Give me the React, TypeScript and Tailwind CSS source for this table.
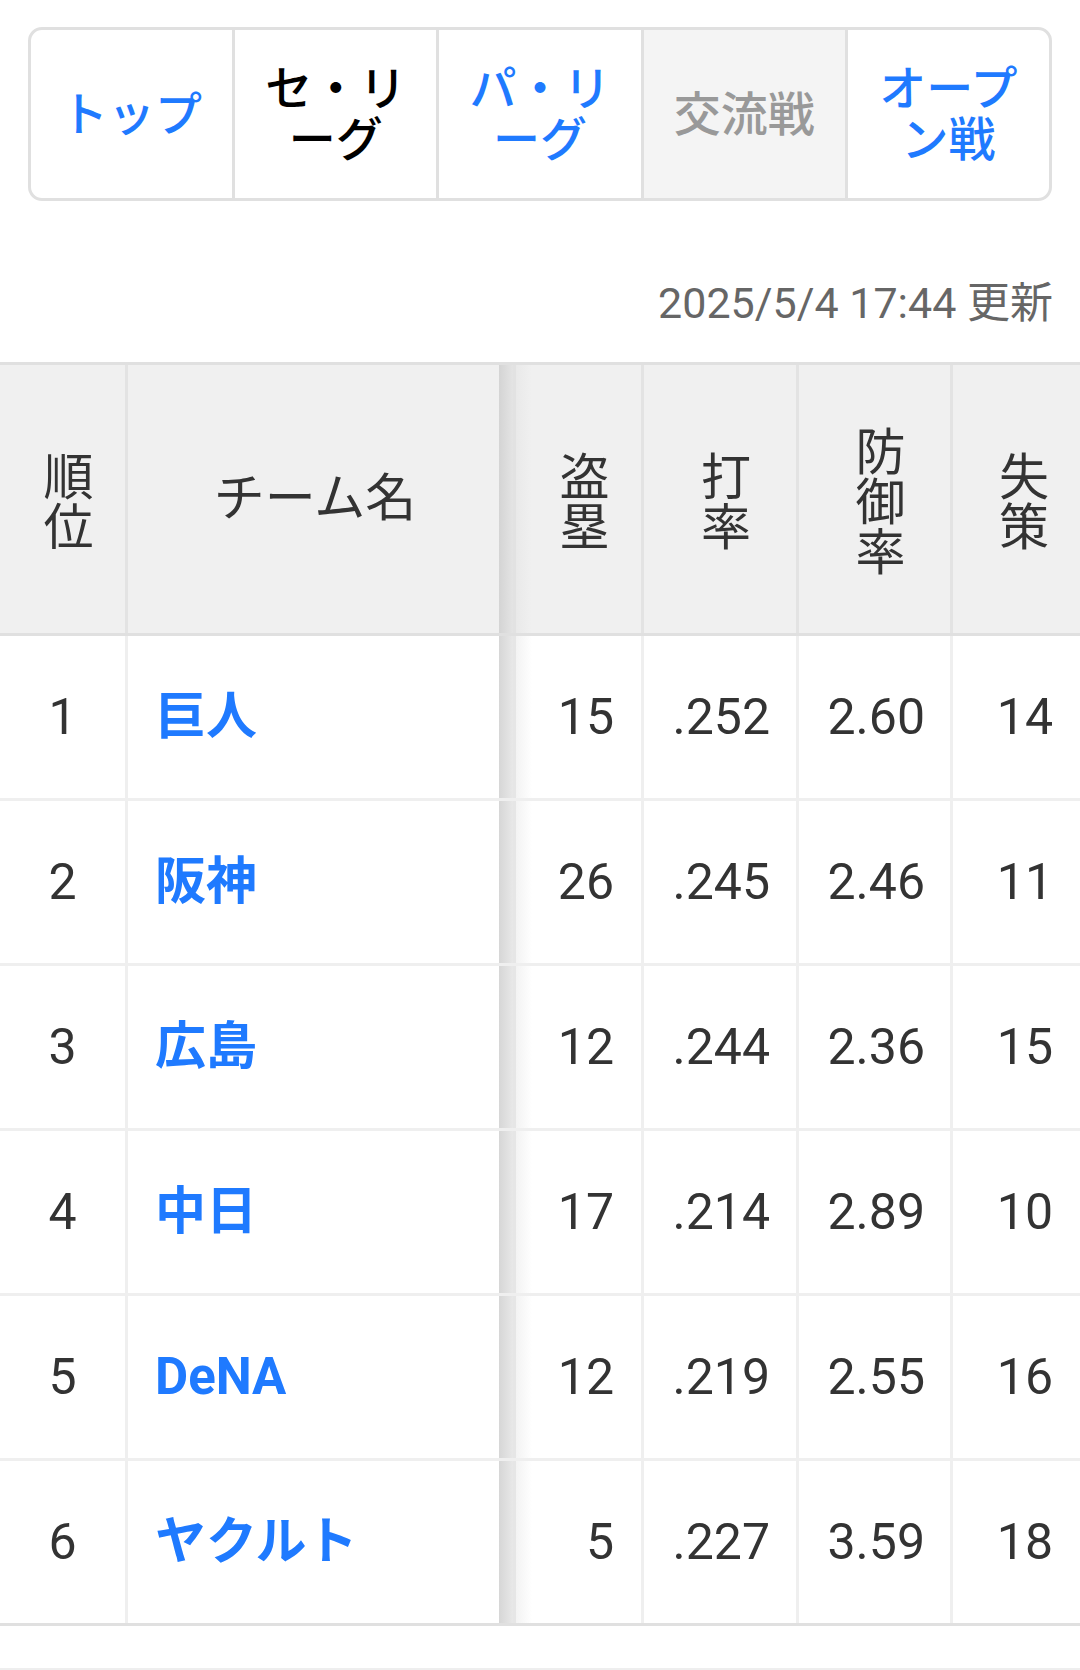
import React from "react";

const FONT = { fontFamily: 'Roboto, "Noto Sans CJK JP", sans-serif' };

const navItems = [
  { label: "トップ", kind: "link" },
  { label: "セ・リーグ", kind: "active" },
  { label: "パ・リーグ", kind: "link" },
  { label: "交流戦", kind: "disabled" },
  { label: "オープン戦", kind: "link" },
];

const rows = [
  { rank: 1, team: "巨人", sb: 15, avg: ".252", era: "2.60", err: 14 },
  { rank: 2, team: "阪神", sb: 26, avg: ".245", era: "2.46", err: 11 },
  { rank: 3, team: "広島", sb: 12, avg: ".244", era: "2.36", err: 15 },
  { rank: 4, team: "中日", sb: 17, avg: ".214", era: "2.89", err: 10 },
  { rank: 5, team: "DeNA", sb: 12, avg: ".219", era: "2.55", err: 16 },
  { rank: 6, team: "ヤクルト", sb: 5, avg: ".227", era: "3.59", err: 18 },
];

function Vert({ text }: { text: string }) {
  return (
    <div className="flex flex-col items-center text-[50px] leading-[50px] text-[#333]">
      {text.split("").map((c, i) => (
        <span key={i}>{c}</span>
      ))}
    </div>
  );
}

export default function App() {
  return (
    <div className="w-[1080px] h-[1670px] bg-white overflow-hidden relative" style={FONT}>
      {/* nav */}
      <div className="pt-[27px] px-[28px]">
        <div className="flex h-[174px] border-[3px] border-[#e0e0e0] rounded-[14px] overflow-hidden">
          {navItems.map((n, i) => (
            <div
              key={i}
              className={
                "flex-1 flex items-center justify-center text-center px-[24px] text-[47px] leading-[51px] font-medium " +
                (i > 0 ? "border-l-[3px] border-[#e0e0e0] " : "") +
                (n.kind === "active"
                  ? "text-black"
                  : n.kind === "disabled"
                  ? "bg-[#f4f4f4] text-[#999999]"
                  : "text-[#1f7aff]")
              }
            >
              {n.label}
            </div>
          ))}
        </div>
      </div>

      {/* timestamp */}
      <div className="mt-[72px] h-[60px] flex items-center justify-end pr-[27px] text-[43px] text-[#666666]">
        2025/5/4 17:44 更新
      </div>

      {/* table */}
      <div className="mt-[29px] w-[1080px] overflow-hidden">
        <div className="w-[1140px] border-t-[3px] border-[#e0e0e0]">
          {/* header */}
          <div className="flex h-[271px] bg-[#f0f0f0] border-b-[3px] border-[#e0e0e0]">
            <div className="w-[128px] shrink-0 border-r-[3px] border-[#e3e3e3] flex items-center justify-center pl-[12px] pt-[8px]">
              <Vert text="順位" />
            </div>
            <div className="w-[371px] shrink-0 flex items-center justify-center pl-[3px] text-[51px] text-[#333]">
              チーム名
            </div>
            <div className="w-[14px] shrink-0 bg-[linear-gradient(to_right,#d4d4d4,#e4e4e4)]" />
            <div className="w-[3px] shrink-0 bg-[#e2e2e2]" />
            <div className="w-[128px] shrink-0 border-r-[3px] border-[#e3e3e3] flex items-center justify-center pl-[12px] pt-[8px] bg-[linear-gradient(to_right,#e9e9e9,#f0f0f0_16px)]">
              <Vert text="盗塁" />
            </div>
            <div className="w-[155px] shrink-0 border-r-[3px] border-[#e3e3e3] flex items-center justify-center pl-[12px] pt-[8px]">
              <Vert text="打率" />
            </div>
            <div className="w-[154px] shrink-0 border-r-[3px] border-[#e3e3e3] flex items-center justify-center pl-[12px] pt-[8px]">
              <Vert text="防御率" />
            </div>
            <div className="w-[130px] shrink-0 flex items-center justify-center pl-[12px] pt-[8px]">
              <Vert text="失策" />
            </div>
          </div>
          {/* body */}
          {rows.map((r, i) => (
            <div
              key={i}
              className={
                "flex h-[165px] border-b-[3px] text-[50px] text-[#333] " +
                (i === rows.length - 1 ? "border-[#e0e0e0]" : "border-[#efefef]")
              }
            >
              <div className="w-[128px] shrink-0 border-r-[3px] border-[#efefef] flex items-center justify-center">
                {r.rank}
              </div>
              <div className="w-[371px] shrink-0 flex items-center pl-[27px] font-bold text-[#1f7aff] text-[51px]">
                {r.team}
              </div>
              <div className="w-[14px] shrink-0 bg-[linear-gradient(to_right,#d6d6d6,#e8e8e8)]" />
              <div className="w-[3px] shrink-0 bg-[#e6e6e6]" />
              <div className="w-[128px] shrink-0 border-r-[3px] border-[#efefef] flex items-center justify-end pr-[27px] bg-[linear-gradient(to_right,#f3f3f3,#ffffff_16px)]">
                {r.sb}
              </div>
              <div className="w-[155px] shrink-0 border-r-[3px] border-[#efefef] flex items-center justify-end pr-[26px]">
                {r.avg}
              </div>
              <div className="w-[154px] shrink-0 border-r-[3px] border-[#efefef] flex items-center justify-end pr-[25px]">
                {r.era}
              </div>
              <div className="w-[130px] shrink-0 flex items-center justify-end pr-[30px]">
                {r.err}
              </div>
            </div>
          ))}
        </div>
      </div>

      <div className="absolute left-0 right-0 bottom-0 h-[2px] bg-[#eeeeee]" />
    </div>
  );
}
